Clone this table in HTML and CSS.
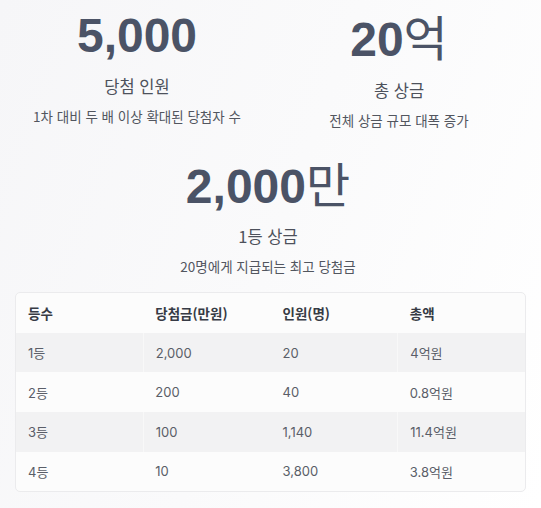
FILE: index.html
```
<!DOCTYPE html>
<html lang="ko">
<head>
<meta charset="utf-8">
<link rel="stylesheet" href="styles.css">
</head>
<body>
<div class="page">
  <div class="stats-top">
    <div class="stat">
      <div class="num">5,000</div>
      <div class="label">당첨 인원</div>
      <div class="desc">1차 대비 두 배 이상 확대된 당첨자 수</div>
    </div>
    <div class="stat">
      <div class="num">20<span class="unit">억</span></div>
      <div class="label">총 상금</div>
      <div class="desc">전체 상금 규모 대폭 증가</div>
    </div>
  </div>
  <div class="stat stat-center">
    <div class="num">2,000<span class="unit">만</span></div>
    <div class="label">1등 상금</div>
    <div class="desc">20명에게 지급되는 최고 당첨금</div>
  </div>
  <div class="table-wrap">
    <table class="prize">
      <thead>
        <tr><th>등수</th><th>당첨금(만원)</th><th>인원(명)</th><th>총액</th></tr>
      </thead>
      <tbody>
        <tr class="alt"><td>1등</td><td class="div">2,000</td><td>20</td><td class="div">4억원</td></tr>
        <tr><td>2등</td><td>200</td><td>40</td><td>0.8억원</td></tr>
        <tr class="alt"><td>3등</td><td class="div">100</td><td>1,140</td><td class="div">11.4억원</td></tr>
        <tr><td>4등</td><td>10</td><td>3,800</td><td>3.8억원</td></tr>
      </tbody>
    </table>
  </div>
</div>
</body>
</html>
```
FILE: styles.css
```
html, body {
  margin: 0;
  padding: 0;
}
body {
  background: linear-gradient(110deg, #f6f6f8 0%, #fafafb 50%, #ffffff 100%);
  font-family: "Noto Sans CJK KR", "Noto Sans", sans-serif;
  width: 541px;
  height: 508px;
  overflow: hidden;
}
.page {
  margin-left: 6px;
  width: 524px;
  padding-top: 7px;
}
.stats-top {
  display: grid;
  grid-template-columns: 1fr 1fr;
}
.stat {
  display: flex;
  flex-direction: column;
  align-items: center;
  text-align: center;
}
.stat-center {
  margin-top: 24px;
}
.num {
  font-family: "Liberation Sans", "Noto Sans CJK KR", sans-serif;
  font-weight: 700;
  font-size: 48px;
  line-height: 57.6px;
  color: #4b5366;
}
.unit {
  font-family: "Noto Sans CJK KR", sans-serif;
  font-weight: 400;
}
.label {
  margin-top: 9px;
  font-size: 16.5px;
  line-height: 24px;
  color: #4d515b;
}
.desc {
  margin-top: 8px;
  font-size: 13.5px;
  line-height: 20px;
  color: #52565f;
}
.table-wrap {
  margin: 16px 0 0 9px;
  width: 509px;
  border: 1px solid #ebebed;
  border-radius: 5px;
  overflow: hidden;
  background: #fcfcfc;
}
.prize {
  width: 100%;
  border-collapse: collapse;
  table-layout: fixed;
  font-family: "Inter", "Noto Sans CJK KR", sans-serif;
  font-size: 13px;
}
.prize th, .prize td {
  text-align: left;
  padding: 0 0 0 12px;
  height: 39.6px;
}
.prize th {
  font-weight: 700;
  color: #373b45;
  font-family: "Noto Sans CJK KR", sans-serif;
  font-size: 13.5px;
}
.prize td {
  color: #5a5e68;
}
.prize tr.alt td {
  background: #f2f2f3;
}
.prize tr.alt td.div {
  border-left: 1px solid #f8f8f8;
}
```
